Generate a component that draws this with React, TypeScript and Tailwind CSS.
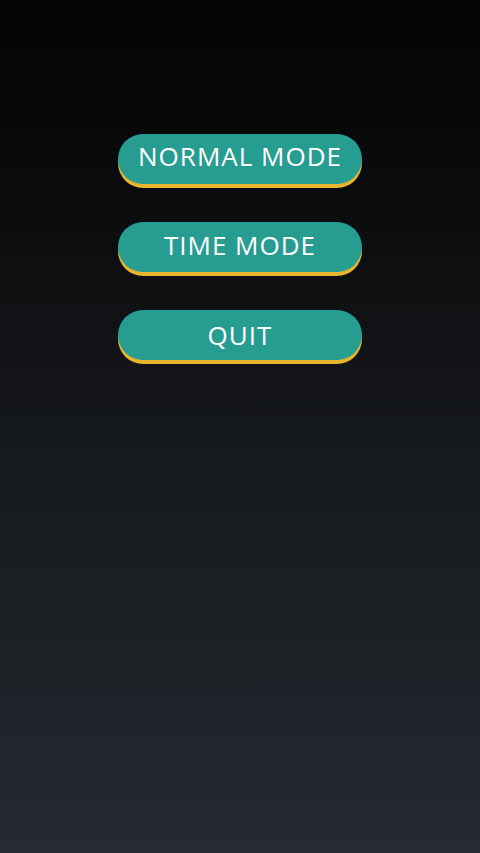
import React from "react";

export default function App() {
  const items = [
    { t: "NORMAL MODE", pad: "pb-[6px]" },
    { t: "TIME MODE", pad: "pb-[4px]" },
    { t: "QUIT", pad: "pb-[1px]" },
  ];
  return (
    <div className="w-[480px] h-[853px] bg-gradient-to-b from-[#040404] via-[#15181b] to-[#262a31] flex flex-col items-center pt-[134px] gap-[38px]" style={{ fontFamily: '"Open Sans", "Noto Sans", sans-serif' }}>
      {items.map((it) => (
        <button
          key={it.t}
          className={`w-[244px] h-[50px] rounded-full bg-[#279c90] shadow-[0_4px_0_#e8b52e] text-white text-[26px] tracking-[1px] leading-none flex items-center justify-center ${it.pad}`}
        >
          {it.t}
        </button>
      ))}
    </div>
  );
}
